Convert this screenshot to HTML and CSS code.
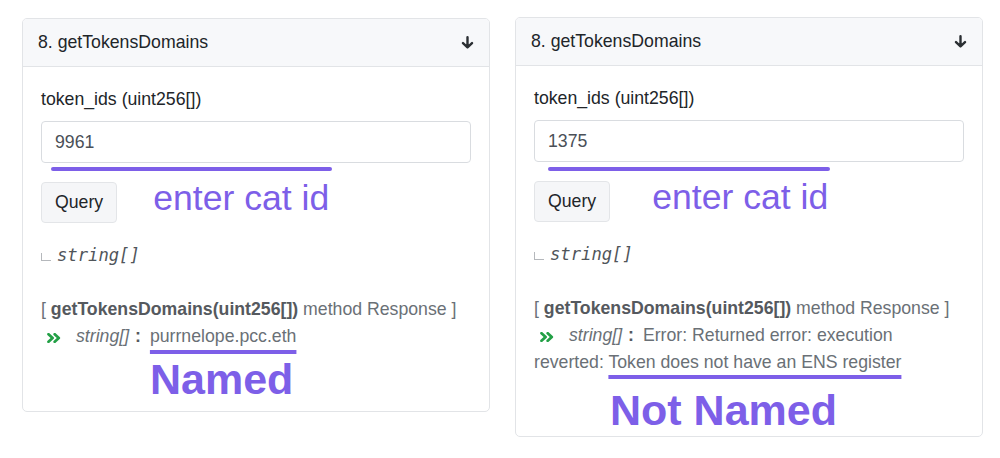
FILE: index.html
```html
<!DOCTYPE html>
<html lang="en">
<head>
<meta charset="utf-8">
<title>getTokensDomains</title>
<link rel="stylesheet" href="styles.css">
</head>
<body>
<div class="page">
  <section class="card card-left">
    <header class="card-head">
      <span class="card-title">8. getTokensDomains</span>
      <svg class="arrow" viewBox="0 0 13 13" width="13" height="13" aria-hidden="true"><path d="M6.5 1.2 V11.3 M2 7.1 L6.5 11.4 L11 7.1" fill="none" stroke="#2b2f33" stroke-width="2.4" stroke-linecap="round" stroke-linejoin="round"/></svg>
    </header>
    <div class="card-body">
      <div class="label">token_ids (uint256[])</div>
      <div class="field field-left"><input class="input" type="text" value="9961"></div>
      <div class="action-row">
        <button class="btn" type="button">Query</button>
        <span class="note note-left">enter cat id</span>
      </div>
      <div class="ret"><span class="corner"></span><span class="ret-type">string[]</span></div>
      <div class="resp">
        <div>[ <b>getTokensDomains(uint256[])</b> method Response ]</div>
        <div><svg class="chev" viewBox="0 0 14 10" width="14" height="10" aria-hidden="true"><path d="M1.5 1.2 L5.6 5 L1.5 8.8 M7.7 1.2 L11.8 5 L7.7 8.8" fill="none" stroke="#23a046" stroke-width="2.7" stroke-linecap="round" stroke-linejoin="round"/></svg><i class="rtype">string[]</i> <b class="colon">:</b><span class="val"><span class="marked">purrnelope.pcc.eth</span></span></div>
      </div>
      <div class="verdict verdict-left">Named</div>
    </div>
  </section>

  <section class="card card-right">
    <header class="card-head">
      <span class="card-title">8. getTokensDomains</span>
      <svg class="arrow" viewBox="0 0 13 13" width="13" height="13" aria-hidden="true"><path d="M6.5 1.2 V11.3 M2 7.1 L6.5 11.4 L11 7.1" fill="none" stroke="#2b2f33" stroke-width="2.4" stroke-linecap="round" stroke-linejoin="round"/></svg>
    </header>
    <div class="card-body">
      <div class="label">token_ids (uint256[])</div>
      <div class="field field-right"><input class="input" type="text" value="1375"></div>
      <div class="action-row">
        <button class="btn" type="button">Query</button>
        <span class="note note-right">enter cat id</span>
      </div>
      <div class="ret"><span class="corner"></span><span class="ret-type">string[]</span></div>
      <div class="resp">
        <div>[ <b>getTokensDomains(uint256[])</b> method Response ]</div>
        <div><svg class="chev" viewBox="0 0 14 10" width="14" height="10" aria-hidden="true"><path d="M1.5 1.2 L5.6 5 L1.5 8.8 M7.7 1.2 L11.8 5 L7.7 8.8" fill="none" stroke="#23a046" stroke-width="2.7" stroke-linecap="round" stroke-linejoin="round"/></svg><i class="rtype">string[]</i> <b class="colon">:</b><span class="val">Error: Returned error: execution<br>reverted: <span class="marked marked-right">Token does not have an ENS register</span></span></div>
      </div>
      <div class="verdict verdict-right">Not Named</div>
    </div>
  </section>
</div>
</body>
</html>
```

FILE: styles.css
```css
* { box-sizing: border-box; }

html, body {
  margin: 0;
  padding: 0;
  background: #ffffff;
}

body {
  font-family: "Liberation Sans", Arial, Helvetica, sans-serif;
  font-size: 17.7px;
  color: #212529;
}

.page {
  display: flex;
  align-items: flex-start;
  gap: 25px;
  padding: 17px 0 0 22px;
}

.card {
  width: 468px;
  border: 1px solid #e2e4e7;
  border-radius: 5px;
  overflow: hidden;
  background: #fff;
}

.card-left { margin-top: 1px; }

.card-head {
  height: 48px;
  display: flex;
  align-items: center;
  justify-content: space-between;
  padding: 0 15px 0 15px;
  background: #f7f8fa;
  border-bottom: 1px solid #e2e4e7;
}

.card-title {
  font-size: 17.7px;
  color: #212529;
  line-height: 1;
}

.arrow { display: block; }

.card-body {
  padding: 19px 18px 0 18px;
}

.label {
  line-height: 26px;
  color: #212529;
}

.field {
  position: relative;
  margin-top: 9px;
}

.field::after {
  content: "";
  position: absolute;
  height: 3.5px;
  border-radius: 2px;
  background: #7d5fe8;
}

.field-left::after { left: 10px; width: 281px; top: 46px; }
.field-right::after { left: 14px; width: 282px; top: 47px; }

.input {
  display: block;
  width: 100%;
  height: 42px;
  padding: 0 13px;
  border: 1px solid #d9dce0;
  border-radius: 4px;
  background: #fff;
  font-family: "Liberation Sans", Arial, Helvetica, sans-serif;
  font-size: 17.7px;
  color: #4a5057;
  outline: none;
}

.action-row {
  display: flex;
  align-items: flex-start;
  margin-top: 19px;
}

.btn {
  height: 41px;
  padding: 0 13px;
  border: 1px solid #e3e5e8;
  border-radius: 4px;
  background: #f5f6f8;
  font-family: "Liberation Sans", Arial, Helvetica, sans-serif;
  font-size: 17.7px;
  color: #212529;
}

.note {
  font-size: 35.6px;
  line-height: 35px;
  color: #7d5fe8;
  margin-top: -1px;
}

.note-left { margin-left: 36px; }
.note-right { margin-left: 42px; }

.ret {
  margin-top: 19px;
  line-height: 26px;
  display: flex;
  align-items: center;
}

.corner {
  display: inline-block;
  width: 10px;
  height: 8px;
  border-left: 1.5px solid #b5b8bc;
  border-bottom: 1.5px solid #b5b8bc;
  margin: 4px 6px 0 0;
}

.ret-type {
  font-family: "DejaVu Sans Mono", "Liberation Mono", monospace;
  font-style: italic;
  font-size: 17.2px;
  color: #50555a;
}

.resp {
  margin-top: 28px;
  line-height: 27px;
  color: #6a7076;
}

.resp b {
  color: #55595e;
}

.chev {
  display: inline-block;
  vertical-align: -1px;
  margin: 0 15px 0 6px;
}

.rtype {
  color: #6a7076;
}

.colon {
  margin-left: 1px;
}

.val {
  margin-left: 9px;
}

.marked {
  text-decoration-line: underline;
  text-decoration-color: #7d5fe8;
  text-decoration-thickness: 3.5px;
  text-underline-offset: 8px;
}

.marked-right {
  text-underline-offset: 7px;
}

.verdict {
  font-size: 43px;
  line-height: 46px;
  font-weight: bold;
  color: #7d5fe8;
}

.verdict-left { margin: 6px 0 9px 109px; }
.verdict-right { margin: 11px 0 3px 76px; }
```
